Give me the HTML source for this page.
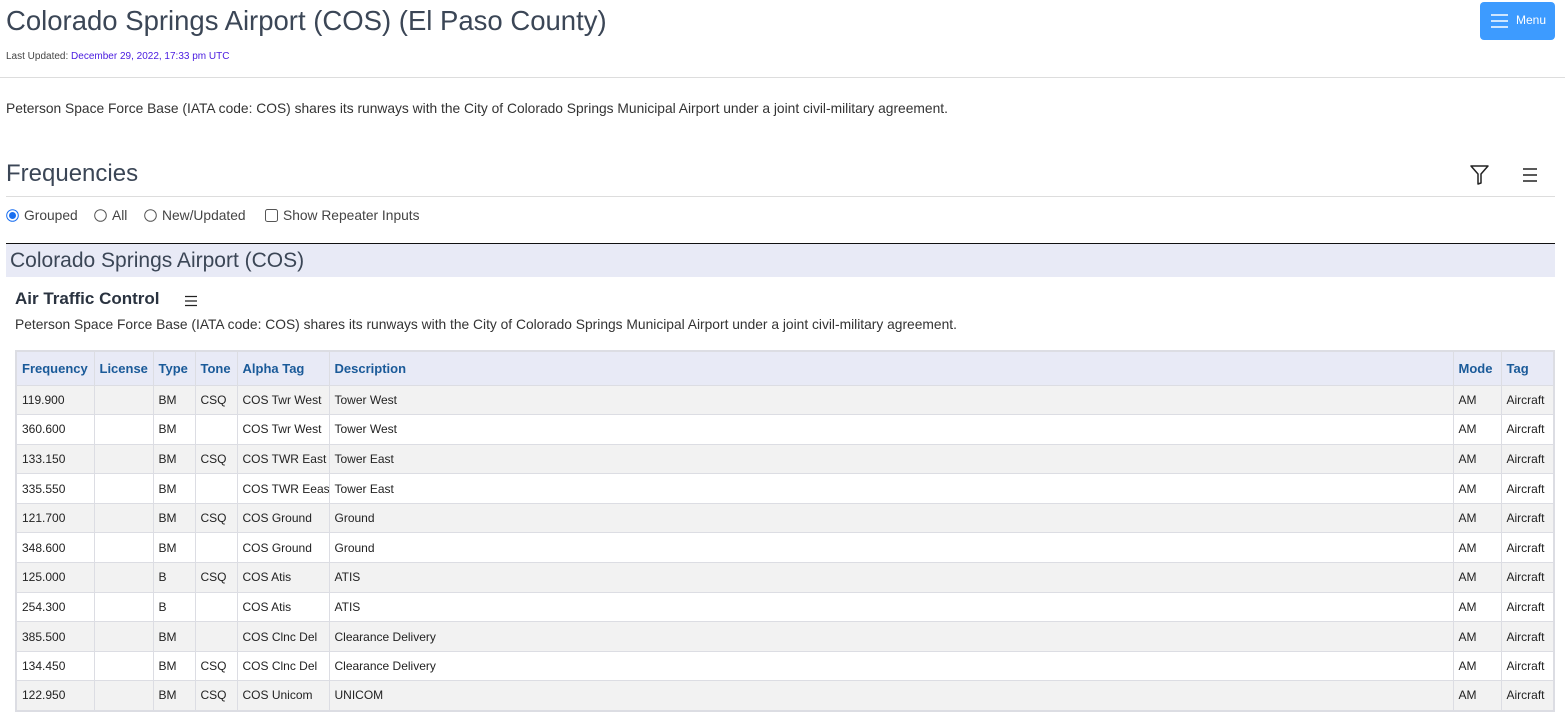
<!DOCTYPE html>
<html><head><meta charset="utf-8"><style>
*{box-sizing:border-box;margin:0;padding:0}
body{width:1565px;height:720px;overflow:hidden;background:#fff;font-family:"Liberation Sans",sans-serif;color:#333;position:relative}
.a{position:absolute;white-space:nowrap}
h1{position:absolute;left:6px;top:5px;font-size:27.5px;font-weight:normal;color:#3b4656}
.menu{position:absolute;left:1480px;top:2px;width:75px;height:38px;background:#3d9bff;border-radius:4px;color:#fff;font-size:12px}
table{position:absolute;left:15px;top:350px;width:1540px;border-collapse:collapse;font-size:12px;border:2px solid #dcdde3;table-layout:fixed}
td,th{border:1px solid #dcdde3;padding:0 5px;text-align:left;white-space:nowrap;overflow:hidden;color:#222}
th{background:#e8eaf6;color:#1a5a99;height:34px;font-size:13px}
td{height:29.6px}
tr:nth-child(even) td{background:#f2f2f2}
.t{font-size:13.8px}
</style></head><body>
<h1>Colorado Springs Airport (COS) (El Paso County)</h1>
<div class="a" style="left:6px;top:51px;font-size:10px;color:#444">Last Updated: <span style="color:#4b1ee0">December 29, 2022, 17:33 pm UTC</span></div>
<div class="menu"><svg class="a" style="left:11px;top:11px" width="18" height="16"><path d="M0 2H17M0 8H17M0 14H17" stroke="#fff" stroke-width="1.5"/></svg><span class="a" style="left:36px;top:11px">Menu</span></div>
<div class="a" style="left:0;top:77px;width:1565px;height:1px;background:#ddd"></div>
<div class="a t" style="left:6px;top:101px;color:#333">Peterson Space Force Base (IATA code: COS) shares its runways with the City of Colorado Springs Municipal Airport under a joint civil-military agreement.</div>
<div class="a" style="left:6px;top:160px;font-size:24px;color:#3b4656">Frequencies</div>
<svg class="a" style="left:1469px;top:164px" width="22" height="22"><path d="M2 2H19L12 10V19L9 20V10Z" fill="none" stroke="#222" stroke-width="1.5" stroke-linejoin="round"/></svg>
<svg class="a" style="left:1522px;top:167px" width="16" height="16"><path d="M1 2H15M1 8H15M1 14H15" stroke="#222" stroke-width="1.5"/></svg>
<div class="a" style="left:6px;top:196px;width:1549px;height:1px;background:#ddd"></div>
<svg class="a" style="left:6px;top:209px" width="13" height="13"><circle cx="6.5" cy="6.5" r="5.8" fill="#fff" stroke="#1a6ff0"/><circle cx="6.5" cy="6.5" r="3.5" fill="#1a6ff0"/></svg>
<div class="a t" style="left:24px;top:208px;color:#444">Grouped</div>
<svg class="a" style="left:94px;top:209px" width="13" height="13"><circle cx="6.5" cy="6.5" r="5.8" fill="#fff" stroke="#555"/></svg>
<div class="a t" style="left:112px;top:208px;color:#444">All</div>
<svg class="a" style="left:144px;top:209px" width="13" height="13"><circle cx="6.5" cy="6.5" r="5.8" fill="#fff" stroke="#555"/></svg>
<div class="a t" style="left:162px;top:208px;color:#444">New/Updated</div>
<svg class="a" style="left:265px;top:209px" width="13" height="13"><rect x="0.5" y="0.5" width="12" height="12" rx="2" fill="#fff" stroke="#555"/></svg>
<div class="a t" style="left:283px;top:208px;color:#444">Show Repeater Inputs</div>
<div class="a" style="left:6px;top:243px;width:1549px;height:1px;background:#111"></div>
<div class="a" style="left:6px;top:244px;width:1549px;height:33px;background:#e8eaf6"></div>
<div class="a" style="left:10px;top:249px;font-size:21px;color:#3b4656">Colorado Springs Airport (COS)</div>
<div class="a" style="left:15px;top:289px;font-size:17px;font-weight:bold;color:#2a3340">Air Traffic Control</div>
<svg class="a" style="left:185px;top:295px" width="12" height="12"><path d="M0 1.5H12M0 6H12M0 10.5H12" stroke="#222" stroke-width="1.2"/></svg>
<div class="a t" style="left:15px;top:317px;color:#333">Peterson Space Force Base (IATA code: COS) shares its runways with the City of Colorado Springs Municipal Airport under a joint civil-military agreement.</div>
<table>
<colgroup><col style="width:78px"><col style="width:59px"><col style="width:42px"><col style="width:42px"><col style="width:92px"><col><col style="width:48px"><col style="width:53px"></colgroup>
<tr><th>Frequency</th><th>License</th><th>Type</th><th>Tone</th><th>Alpha Tag</th><th>Description</th><th>Mode</th><th>Tag</th></tr>
<tr><td>119.900</td><td></td><td>BM</td><td>CSQ</td><td>COS Twr West</td><td>Tower West</td><td>AM</td><td>Aircraft</td></tr>
<tr><td>360.600</td><td></td><td>BM</td><td></td><td>COS Twr West</td><td>Tower West</td><td>AM</td><td>Aircraft</td></tr>
<tr><td>133.150</td><td></td><td>BM</td><td>CSQ</td><td>COS TWR East</td><td>Tower East</td><td>AM</td><td>Aircraft</td></tr>
<tr><td>335.550</td><td></td><td>BM</td><td></td><td>COS TWR Eeas</td><td>Tower East</td><td>AM</td><td>Aircraft</td></tr>
<tr><td>121.700</td><td></td><td>BM</td><td>CSQ</td><td>COS Ground</td><td>Ground</td><td>AM</td><td>Aircraft</td></tr>
<tr><td>348.600</td><td></td><td>BM</td><td></td><td>COS Ground</td><td>Ground</td><td>AM</td><td>Aircraft</td></tr>
<tr><td>125.000</td><td></td><td>B</td><td>CSQ</td><td>COS Atis</td><td>ATIS</td><td>AM</td><td>Aircraft</td></tr>
<tr><td>254.300</td><td></td><td>B</td><td></td><td>COS Atis</td><td>ATIS</td><td>AM</td><td>Aircraft</td></tr>
<tr><td>385.500</td><td></td><td>BM</td><td></td><td>COS Clnc Del</td><td>Clearance Delivery</td><td>AM</td><td>Aircraft</td></tr>
<tr><td>134.450</td><td></td><td>BM</td><td>CSQ</td><td>COS Clnc Del</td><td>Clearance Delivery</td><td>AM</td><td>Aircraft</td></tr>
<tr><td>122.950</td><td></td><td>BM</td><td>CSQ</td><td>COS Unicom</td><td>UNICOM</td><td>AM</td><td>Aircraft</td></tr>
</table>
</body></html>
